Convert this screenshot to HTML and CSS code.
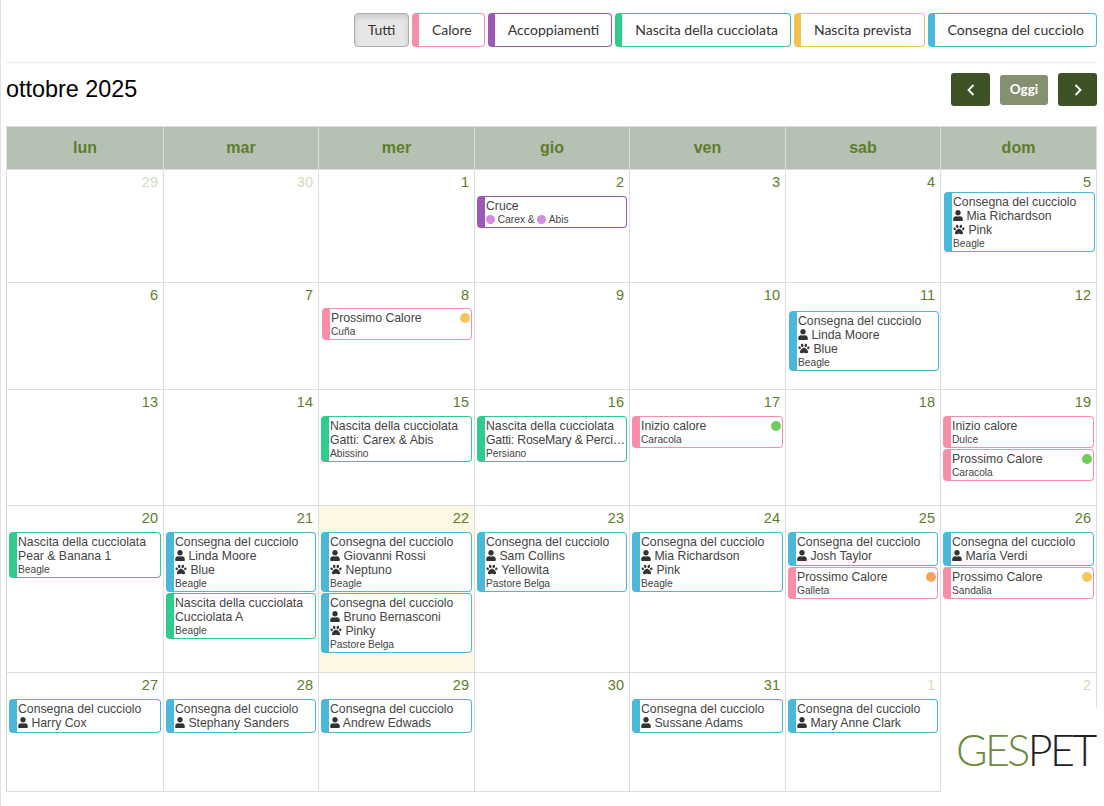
FILE: index.html
```html
<!DOCTYPE html>
<html lang="it">
  <head>
    <meta charset="UTF-8" />
    <title>Calendario</title>
    <link rel="stylesheet" href="styles.css">
  </head>
  <body>
    <svg class="defs" width="0" height="0">
      <symbol id="user" viewBox="0 0 448 512"><path d="M224 256c70.7 0 128-57.3 128-128S294.7 0 224 0 96 57.3 96 128s57.3 128 128 128zm89.6 32h-16.7c-22.2 10.2-46.9 16-72.9 16s-50.6-5.8-72.9-16h-16.7C60.2 288 0 348.2 0 422.4V464c0 26.5 21.5 48 48 48h352c26.5 0 48-21.5 48-48v-41.6c0-74.2-60.2-134.4-134.4-134.4z"/></symbol>
      <symbol id="paw" viewBox="0 0 512 512"><path d="M256 224c-79.41 0-192 122.76-192 200.25 0 34.9 26.81 55.75 71.74 55.75 48.84 0 81.09-25.08 120.26-25.08 39.51 0 71.85 25.08 120.26 25.08 44.93 0 71.74-20.85 71.74-55.75C448 346.76 335.41 224 256 224zm-147.28-12.61c-10.4-34.65-42.44-57.09-71.56-50.13-29.12 6.96-44.29 40.69-33.89 75.34 10.4 34.65 42.44 57.09 71.56 50.13 29.12-6.96 44.29-40.69 33.89-75.34zm84.72-20.78c30.94-8.14 46.42-49.94 34.58-93.36s-46.52-72.01-77.46-63.87-46.42 49.94-34.58 93.36c11.84 43.42 46.52 72.01 77.46 63.87zm281.39-29.34c-29.12-6.96-61.15 15.48-71.56 50.13-10.4 34.65 4.77 68.38 33.89 75.34 29.12 6.96 61.15-15.48 71.56-50.13 10.4-34.65-4.77-68.38-33.89-75.34zm-156.27 29.34c30.94 8.14 65.62-20.45 77.46-63.87 11.84-43.42-3.64-85.21-34.58-93.36s-65.62 20.45-77.46 63.87c-11.84 43.42 3.64 85.22 34.58 93.36z"/></symbol>
    </svg>

    <div class="page">
      <nav class="filtri">
        <button class="filtro attivo">Tutti</button>
        <button class="filtro calore">Calore</button>
        <button class="filtro accoppiamenti">Accoppiamenti</button>
        <button class="filtro nascita">Nascita della cucciolata</button>
        <button class="filtro prevista">Nascita prevista</button>
        <button class="filtro consegna">Consegna del cucciolo</button>
      </nav>

      <header class="toolbar">
        <h2>ottobre 2025</h2>
        <div class="nav-mese">
          <button class="btn-mese" aria-label="Precedente"><svg width="8" height="12" viewBox="0 0 8 12"><path d="M6.5 1 1.5 6l5 5" /></svg></button>
          <button class="btn-oggi">Oggi</button>
          <button class="btn-mese" aria-label="Successivo"><svg width="8" height="12" viewBox="0 0 8 12"><path d="M1.5 1l5 5-5 5" /></svg></button>
        </div>
      </header>

      <main class="mese">
        <div class="giorno-nome">lun</div>
        <div class="giorno-nome">mar</div>
        <div class="giorno-nome">mer</div>
        <div class="giorno-nome">gio</div>
        <div class="giorno-nome">ven</div>
        <div class="giorno-nome">sab</div>
        <div class="giorno-nome">dom</div>

        <!-- settimana 1 -->
        <div class="cella"><div class="num fuori">29</div></div>
        <div class="cella"><div class="num fuori">30</div></div>
        <div class="cella"><div class="num">1</div></div>
        <div class="cella"><div class="num">2</div>
          <div class="evento accoppiamenti">
            <div class="riga">Cruce</div>
            <div class="riga piccola"><span class="pallino-sm"></span> Carex &amp; <span class="pallino-sm"></span> Abis</div>
          </div>
        </div>
        <div class="cella"><div class="num">3</div></div>
        <div class="cella"><div class="num">4</div></div>
        <div class="cella"><div class="num">5</div>
          <div class="evento consegna su">
            <div class="riga">Consegna del cucciolo</div>
            <div class="riga"><svg class="ico"><use href="#user" /></svg> Mia Richardson</div>
            <div class="riga"><svg class="ico zampa"><use href="#paw" /></svg> Pink</div>
            <div class="riga piccola">Beagle</div>
          </div>
        </div>

        <!-- settimana 2 -->
        <div class="cella"><div class="num">6</div></div>
        <div class="cella"><div class="num">7</div></div>
        <div class="cella"><div class="num">8</div>
          <div class="evento calore alto">
            <div class="riga con-stato">Prossimo Calore<span class="stato giallo"></span></div>
            <div class="riga piccola">Cuña</div>
          </div>
        </div>
        <div class="cella"><div class="num">9</div></div>
        <div class="cella"><div class="num">10</div></div>
        <div class="cella"><div class="num">11</div>
          <div class="evento consegna giu">
            <div class="riga">Consegna del cucciolo</div>
            <div class="riga"><svg class="ico"><use href="#user" /></svg> Linda Moore</div>
            <div class="riga"><svg class="ico zampa"><use href="#paw" /></svg> Blue</div>
            <div class="riga piccola">Beagle</div>
          </div>
        </div>
        <div class="cella"><div class="num">12</div></div>

        <!-- settimana 3 -->
        <div class="cella"><div class="num">13</div></div>
        <div class="cella"><div class="num">14</div></div>
        <div class="cella"><div class="num">15</div>
          <div class="evento nascita">
            <div class="riga">Nascita della cucciolata</div>
            <div class="riga">Gatti: Carex &amp; Abis</div>
            <div class="riga piccola">Abissino</div>
          </div>
        </div>
        <div class="cella"><div class="num">16</div>
          <div class="evento nascita">
            <div class="riga">Nascita della cucciolata</div>
            <div class="riga lunga">Gatti: RoseMary &amp; Perci…</div>
            <div class="riga piccola">Persiano</div>
          </div>
        </div>
        <div class="cella"><div class="num">17</div>
          <div class="evento calore">
            <div class="riga con-stato">Inizio calore<span class="stato verde"></span></div>
            <div class="riga piccola">Caracola</div>
          </div>
        </div>
        <div class="cella"><div class="num">18</div></div>
        <div class="cella"><div class="num">19</div>
          <div class="evento calore">
            <div class="riga">Inizio calore</div>
            <div class="riga piccola">Dulce</div>
          </div>
          <div class="evento calore">
            <div class="riga con-stato">Prossimo Calore<span class="stato verde"></span></div>
            <div class="riga piccola">Caracola</div>
          </div>
        </div>

        <!-- settimana 4 -->
        <div class="cella"><div class="num">20</div>
          <div class="evento nascita">
            <div class="riga">Nascita della cucciolata</div>
            <div class="riga">Pear &amp; Banana 1</div>
            <div class="riga piccola">Beagle</div>
          </div>
        </div>
        <div class="cella"><div class="num">21</div>
          <div class="evento consegna">
            <div class="riga">Consegna del cucciolo</div>
            <div class="riga"><svg class="ico"><use href="#user" /></svg> Linda Moore</div>
            <div class="riga"><svg class="ico zampa"><use href="#paw" /></svg> Blue</div>
            <div class="riga piccola">Beagle</div>
          </div>
          <div class="evento nascita">
            <div class="riga">Nascita della cucciolata</div>
            <div class="riga">Cucciolata A</div>
            <div class="riga piccola">Beagle</div>
          </div>
        </div>
        <div class="cella oggi"><div class="num">22</div>
          <div class="evento consegna">
            <div class="riga">Consegna del cucciolo</div>
            <div class="riga"><svg class="ico"><use href="#user" /></svg> Giovanni Rossi</div>
            <div class="riga"><svg class="ico zampa"><use href="#paw" /></svg> Neptuno</div>
            <div class="riga piccola">Beagle</div>
          </div>
          <div class="evento consegna">
            <div class="riga">Consegna del cucciolo</div>
            <div class="riga"><svg class="ico"><use href="#user" /></svg> Bruno Bernasconi</div>
            <div class="riga"><svg class="ico zampa"><use href="#paw" /></svg> Pinky</div>
            <div class="riga piccola">Pastore Belga</div>
          </div>
        </div>
        <div class="cella"><div class="num">23</div>
          <div class="evento consegna">
            <div class="riga">Consegna del cucciolo</div>
            <div class="riga"><svg class="ico"><use href="#user" /></svg> Sam Collins</div>
            <div class="riga"><svg class="ico zampa"><use href="#paw" /></svg> Yellowita</div>
            <div class="riga piccola">Pastore Belga</div>
          </div>
        </div>
        <div class="cella"><div class="num">24</div>
          <div class="evento consegna">
            <div class="riga">Consegna del cucciolo</div>
            <div class="riga"><svg class="ico"><use href="#user" /></svg> Mia Richardson</div>
            <div class="riga"><svg class="ico zampa"><use href="#paw" /></svg> Pink</div>
            <div class="riga piccola">Beagle</div>
          </div>
        </div>
        <div class="cella"><div class="num">25</div>
          <div class="evento consegna breve">
            <div class="riga">Consegna del cucciolo</div>
            <div class="riga"><svg class="ico"><use href="#user" /></svg> Josh Taylor</div>
          </div>
          <div class="evento calore">
            <div class="riga con-stato">Prossimo Calore<span class="stato arancio"></span></div>
            <div class="riga piccola">Galleta</div>
          </div>
        </div>
        <div class="cella"><div class="num">26</div>
          <div class="evento consegna breve">
            <div class="riga">Consegna del cucciolo</div>
            <div class="riga"><svg class="ico"><use href="#user" /></svg> Maria Verdi</div>
          </div>
          <div class="evento calore">
            <div class="riga con-stato">Prossimo Calore<span class="stato giallo"></span></div>
            <div class="riga piccola">Sandalia</div>
          </div>
        </div>

        <!-- settimana 5 -->
        <div class="cella"><div class="num">27</div>
          <div class="evento consegna breve">
            <div class="riga">Consegna del cucciolo</div>
            <div class="riga"><svg class="ico"><use href="#user" /></svg> Harry Cox</div>
          </div>
        </div>
        <div class="cella"><div class="num">28</div>
          <div class="evento consegna breve">
            <div class="riga">Consegna del cucciolo</div>
            <div class="riga"><svg class="ico"><use href="#user" /></svg> Stephany Sanders</div>
          </div>
        </div>
        <div class="cella"><div class="num">29</div>
          <div class="evento consegna breve">
            <div class="riga">Consegna del cucciolo</div>
            <div class="riga"><svg class="ico"><use href="#user" /></svg> Andrew Edwads</div>
          </div>
        </div>
        <div class="cella"><div class="num">30</div></div>
        <div class="cella"><div class="num">31</div>
          <div class="evento consegna breve">
            <div class="riga">Consegna del cucciolo</div>
            <div class="riga"><svg class="ico"><use href="#user" /></svg> Sussane Adams</div>
          </div>
        </div>
        <div class="cella"><div class="num fuori">1</div>
          <div class="evento consegna breve">
            <div class="riga">Consegna del cucciolo</div>
            <div class="riga"><svg class="ico"><use href="#user" /></svg> Mary Anne Clark</div>
          </div>
        </div>
        <div class="cella"><div class="num fuori">2</div></div>
      </main>
    </div>

    <div class="logo"><span class="logo-ges">GES</span><span class="logo-pet">PET</span></div>
  </body>
</html>
```

FILE: styles.css
```css
html,
body {
  height: 100%;
  overflow: hidden;
}

body {
  margin: 0;
  background-color: white;
  color: #333;
  font-family: "Liberation Sans", Arial, sans-serif;
}

.defs {
  position: absolute;
}

.page {
  height: 100%;
  box-sizing: border-box;
  border-left: 1px solid #e2e2e2;
  padding: 13px 7px 0 5px;
}

/* filtri in alto */
.filtri {
  display: flex;
  justify-content: flex-end;
  gap: 3px;
  padding-bottom: 15px;
  border-bottom: 1px solid #eee;
}

.filtro {
  height: 34px;
  box-sizing: border-box;
  padding: 0 12px 2px 13px;
  background-color: white;
  border: 1px solid #ccc;
  border-left-width: 7px;
  border-radius: 4px;
  color: #333;
  font-family: Lato, sans-serif;
  font-size: 14px;
  white-space: nowrap;
}

.filtro.attivo {
  padding: 0 12.5px 2px;
  border: 1px solid #adadad;
  background-color: #e6e6e6;
  box-shadow: inset 0 3px 5px rgba(0, 0, 0, 0.125);
}

.filtro.calore { border-color: #f78fa9; }
.filtro.accoppiamenti { border-color: #9b59b6; }
.filtro.nascita { border-color: #2ecc8f; }
.filtro.prevista { border-color: #f6c04d; }
.filtro.consegna { border-color: #4ab8d8; }

/* titolo e frecce */
.toolbar {
  display: flex;
  justify-content: space-between;
  align-items: center;
  height: 33px;
  margin: 10px 0 20px;
}

.toolbar h2 {
  margin: 0;
  color: black;
  font-size: 23.4px;
  font-weight: normal;
}

.nav-mese {
  display: flex;
  align-items: center;
  gap: 10px;
}

.btn-mese {
  display: flex;
  align-items: center;
  justify-content: center;
  width: 39px;
  height: 33px;
  padding: 0;
  border: none;
  border-radius: 3px;
  background-color: #3d5225;
}

.btn-mese path {
  fill: none;
  stroke: white;
  stroke-width: 1.8;
}

.btn-oggi {
  width: 48px;
  height: 30px;
  padding: 0 0 2px;
  border: none;
  border-radius: 3px;
  background-color: #84906f;
  color: white;
  font-family: Lato, sans-serif;
  font-size: 13.5px;
  font-weight: bold;
}

/* griglia del mese */
.mese {
  display: grid;
  grid-template-columns: 157px 155px 156px 155px 156px 155px 156px;
  grid-template-rows: 43px 113px 107px 116px 167px 119px;
  width: 1091px;
  box-sizing: border-box;
  border-top: 1px solid #ddd;
  border-left: 1px solid #ddd;
}

.giorno-nome {
  display: flex;
  align-items: center;
  justify-content: center;
  box-sizing: border-box;
  background-color: #b5c1b3;
  border-right: 1px solid #ddd;
  border-bottom: 1px solid #ddd;
  color: #5e7d2c;
  font-size: 16px;
  font-weight: bold;
}

.cella {
  min-width: 0;
  box-sizing: border-box;
  border-right: 1px solid #ddd;
  border-bottom: 1px solid #ddd;
  padding: 4px 2px 0 2px;
}

.cella.oggi {
  background-color: #fdf8e3;
}

.num {
  height: 22px;
  padding-right: 3px;
  color: #5e7d2c;
  font-size: 14.5px;
  line-height: 16px;
  text-align: right;
}

.num.fuori {
  color: #d0dbbd;
}

/* eventi */
.evento {
  box-sizing: border-box;
  margin-bottom: 1px;
  padding: 2px 1px 0 1px;
  border: 1px solid #ccc;
  border-left-width: 8px;
  border-radius: 4px;
  background-color: white;
  overflow: hidden;
}

.evento.calore { border-color: #f78fa9; }
.evento.accoppiamenti { border-color: #9b59b6; }
.evento.nascita { border-color: #2ecc8f; }
.evento.consegna { border-color: #4ab8d8; }

.evento.breve {
  padding-bottom: 2px;
}

/* questi tre nel riferimento sono fuori allineamento di qualche pixel */
.evento.su {
  margin: -4px -1px 1px 1px;
}

.evento.giu {
  margin: 2px -1px 1px 1px;
}

.evento.alto {
  margin: -1px 0 1px 1px;
}

.riga {
  color: #444;
  font-size: 12.25px;
  line-height: 14px;
  white-space: nowrap;
}

.riga.piccola {
  font-size: 10.2px;
}

.riga.lunga {
  letter-spacing: -0.2px;
}

.con-stato {
  display: flex;
  align-items: center;
  justify-content: space-between;
}

.stato {
  flex: none;
  width: 10px;
  height: 10px;
  border-radius: 50%;
}

.stato.giallo { background-color: #f2c75c; }
.stato.verde { background-color: #6fcb5c; }
.stato.arancio { background-color: #f4a55c; }

.pallino-sm {
  display: inline-block;
  width: 9px;
  height: 9px;
  border-radius: 50%;
  background-color: #d48be0;
  vertical-align: -1px;
}

.ico {
  width: 10px;
  height: 11px;
  fill: #333;
  vertical-align: -1px;
}

.ico.zampa {
  width: 12px;
}

/* logo sopra l'ultima cella */
.logo {
  position: absolute;
  right: 0;
  bottom: 0;
  width: 163px;
  height: 98px;
  box-sizing: border-box;
  padding: 16px 0 0 15px;
  background-color: white;
  font-family: Lato, sans-serif;
  font-size: 43px;
  font-weight: 300;
  letter-spacing: -2.6px;
  line-height: 52px;
  white-space: nowrap;
}

.logo-ges {
  color: #6b8a3f;
}

.logo-pet {
  color: #222;
}
```
